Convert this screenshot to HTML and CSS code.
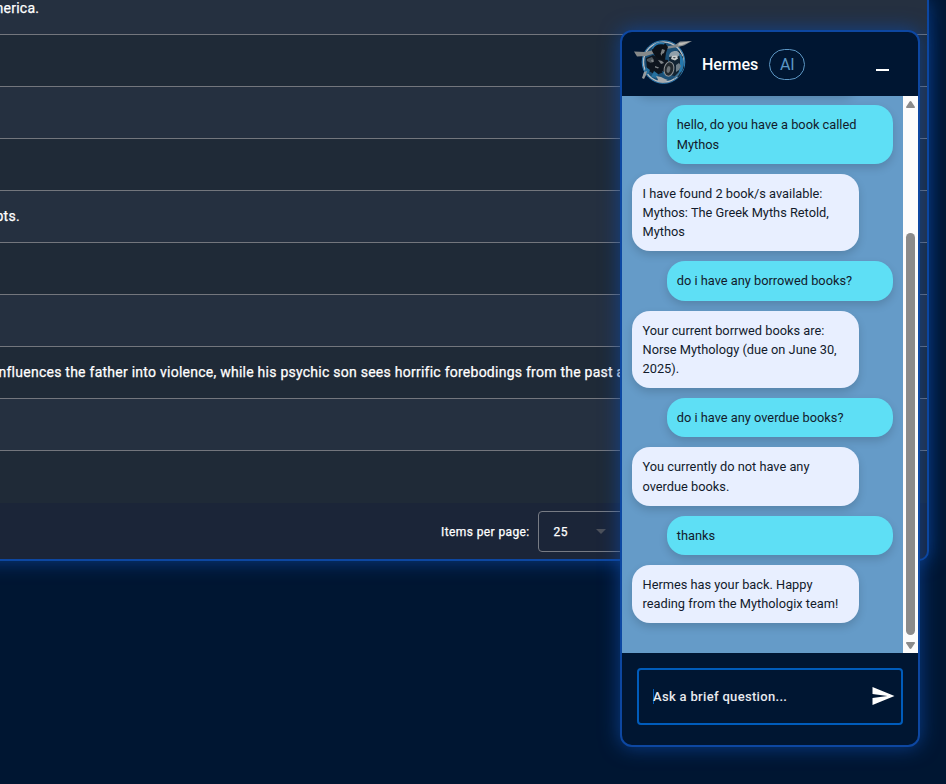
FILE: index.html
```html
<!DOCTYPE html>
<html lang="en">
<head>
<meta charset="utf-8">
<title>Mythologix</title>
<link rel="stylesheet" href="styles.css">
</head>
<body>
<main class="catalog">
  <div class="row">merica.</div>
  <div class="row"></div>
  <div class="row"></div>
  <div class="row"></div>
  <div class="row">pts.</div>
  <div class="row"></div>
  <div class="row"></div>
  <div class="row"><span class="long">nfluences the father into violence, while his psychic son sees horrific forebodings from the past a</span></div>
  <div class="row"></div>
  <div class="row"></div>
  <div class="paginator">
    <span>Items per page:</span>
    <div class="select"><span>25</span><i class="caret"></i></div>
  </div>
</main>

<section class="chat">
  <header class="chat-head">
    <svg class="logo" width="62" height="46" viewBox="0 0 62 46">
      <circle cx="31.5" cy="23" r="21.3" fill="#14263c" stroke="#2d83bd" stroke-width="1"/>
      <circle cx="31.5" cy="23" r="20" fill="#1b4f76" stroke="#b4bdc5" stroke-width="1.4"/>
      <path d="M2 12.5l11 .5 14-3v3l-13 4-9 .5z" fill="#85898a"/>
      <path d="M34 7.5l9-1.5 5-3.5 12-.5-8 4.500-6 1.500-12 2z" fill="#83888c"/>
      <path d="M47 4l11-1.500-8 3.500-4 .5z" fill="#bebdb9"/>
      <path d="M20 12c1-6 6-9 13-8l3 4-2 6-1 7-8 1-2-5z" fill="#0b1119"/>
      <path d="M20 10c1-5 6-8 13-6l-1 1.500c-5-1-9 0-11 4.500z" fill="#2674a8"/>
      <path d="M30 10l3 1-1 3-2 1v2l-1.500-2z" fill="#7d8183"/>
      <path d="M14 19l7-3 7 4 8 1 1 6-5 6-8 3-9-5z" fill="#0e151e"/>
      <path d="M15 20l5-2 2 3-3 3-4-2z" fill="#4d555b"/>
      <path d="M19 21l2-.5 1 2-2 1zM26 21l4 1 2 2-3 1zM23 27l4 1.500-1 1-3-1z" fill="#7f8488"/>
      <path d="M14 28l4 3-2 4-5 2zM22 32l4 3-1 4-6-1zM30 32l4 2-2 2z" fill="#25709f"/>
      <path d="M12 33l3-1-1 4-2 4-2-1z" fill="#969a9d"/>
      <path d="M24 37l5 1 4 2 3 1-5 2.500-6-1 1-2z" fill="#a8abad"/>
      <path d="M37 18l4-5 6-1 4 6 1 11-5 9-9-2z" fill="#122433"/>
      <path d="M37 18c0-5 5-7 9-5.500l4 4.500-3-.5-2 2-5-1z" fill="#91a0aa"/>
      <path d="M47 14c5 4 6 11 3 18l-4 4 2-8 0-8z" fill="#2477ac"/>
      <path d="M40 17l4.500-.5 1.500 3-3 2-4-1.500z" fill="#c9cccb"/>
      <path d="M41 18l3 .5-2 1z" fill="#24323c"/>
      <path d="M44 26l3-2 2 3-2 4-3 2z" fill="#6e7d87"/>
      <ellipse cx="37" cy="30" rx="4.8" ry="7.2" transform="rotate(10 37 30)" fill="#232a2f" stroke="#8f9497" stroke-width="1"/>
      <ellipse cx="36.500" cy="30.500" rx="1.8" ry="3.4" transform="rotate(10 36.5 30.5)" fill="#6d7478"/>
      <path d="M43 37l5-5-1 4-5 4z" fill="#3d7296"/>
    </svg>
    <h1>Hermes</h1>
    <span class="badge">AI</span>
    <button class="minimize" aria-label="Minimize"></button>
  </header>
  <div class="chat-body">
    <div class="messages">
      <p class="bubble bot"></p>
      <p class="bubble user">hello, do you have a book called Mythos</p>
      <p class="bubble bot">I have found 2 book/s available: Mythos: The Greek Myths Retold, Mythos</p>
      <p class="bubble user">do i have any borrowed books?</p>
      <p class="bubble bot">Your current borrwed books are: Norse Mythology (due on June 30, 2025).</p>
      <p class="bubble user">do i have any overdue books?</p>
      <p class="bubble bot">You currently do not have any overdue books.</p>
      <p class="bubble user">thanks</p>
      <p class="bubble bot">Hermes has your back. Happy reading from the Mythologix team!</p>
    </div>
    <div class="scrollbar">
      <svg width="15" height="17" viewBox="0 0 15 17"><path d="M3.800 12Q2.600 12 3.200 10.800L6.600 5.400Q7.500 4.500 8.400 5.400L11.800 10.800Q12.400 12 11.200 12Z" fill="#8b8b8b"/></svg>
      <div class="thumb"></div>
      <svg width="15" height="18" viewBox="0 0 15 18"><path d="M3.800 7Q2.600 7 3.200 8.200L6.600 13.600Q7.500 14.500 8.400 13.600L11.800 8.200Q12.400 7 11.200 7Z" fill="#8b8b8b"/></svg>
    </div>
  </div>
  <footer class="chat-foot">
    <div class="field">
      <i class="cursor"></i>
      <span class="placeholder">Ask a brief question...</span>
      <svg class="send" width="24" height="24" viewBox="0 0 24 24"><path d="M1.500 21L23.500 12 1.500 3v7l15 2-15 2z" fill="#fff"/></svg>
    </div>
  </footer>
</section>
</body>
</html>
```
FILE: styles.css
```css
* { box-sizing: border-box; }

body {
  margin: 0;
  height: 784px;
  overflow: hidden;
  background: #001632;
  color: #fff;
  font-family: Roboto, "Liberation Sans", sans-serif;
}

.catalog {
  width: 989px;
  height: 561px;
  margin-left: -60px;
  border: solid #0d47a1;
  border-width: 0 2px 2px 0;
  border-radius: 0 0 10px 0;
  background: #1b2538;
  box-shadow: 0 0 20px rgba(13, 71, 161, 0.8);
  overflow: hidden;
}

.row {
  display: flex;
  align-items: center;
  height: 52px;
  padding: 0 0 1px 60px;
  border-bottom: 1px solid #73767d;
  background: #1f2a37;
  font-size: 14px;
  font-weight: 400;
  letter-spacing: 0.25px;
  white-space: nowrap;
  -webkit-text-stroke: 0.25px currentColor;
}

.row:nth-child(odd) { background: #253040; }
.row:first-child { height: 35px; padding-bottom: 18px; text-indent: -9px; }
.row:nth-child(5) { text-indent: -4.5px; }
.row:nth-child(10) { border-bottom: 0; }
.long { margin-left: -1.5px; }

.paginator {
  display: flex;
  align-items: center;
  gap: 8px;
  height: 57px;
  padding-left: 501px;
  font-size: 12px;
  font-weight: 400;
  letter-spacing: 0.4px;
  -webkit-text-stroke: 0.25px currentColor;
}

.paginator > span { width: 89px; white-space: nowrap; }

.select {
  display: flex;
  align-items: center;
  gap: 28px;
  width: 108px;
  height: 41px;
  padding-left: 14.5px;
  border: 1px solid #777b84;
  border-radius: 4px;
}

.caret {
  border: 5px solid transparent;
  border-top-color: #4c5059;
  border-bottom: 0;
}

.chat {
  position: absolute;
  top: 30px;
  left: 620px;
  display: flex;
  flex-direction: column;
  width: 300px;
  height: 717px;
  border: 2px solid #0d47a1;
  border-radius: 12px;
  background: #001632;
  box-shadow: 0 0 20px rgba(13, 71, 161, 0.8);
  overflow: hidden;
}

.chat-head {
  display: flex;
  align-items: center;
  height: 64px;
  padding-left: 10px;
}

.logo { margin-top: -5px; }

.chat-head h1 {
  margin: 0 0 0 8px;
  font-size: 16px;
  font-weight: 500;
  letter-spacing: 0;
}

.badge {
  width: 36px;
  height: 31px;
  margin-left: 11px;
  border: 1px solid #5c96c4;
  border-radius: 16px;
  color: #5c96c4;
  font-size: 16px;
  line-height: 29px;
  text-align: center;
}

.minimize {
  width: 13px;
  height: 2px;
  margin: 12px 29px 0 auto;
  padding: 0;
  border: 0;
  background: #fff;
}

.chat-body {
  display: flex;
  height: 557px;
  background: #659bc8;
}

.messages {
  display: flex;
  flex: 1;
  flex-direction: column;
  justify-content: flex-end;
  gap: 10px;
  padding: 0 10px 29.6px;
  overflow: hidden;
}

.bubble {
  flex: none;
  width: 226.5px;
  margin: 0;
  padding: 10px;
  border-radius: 18px;
  box-shadow: 0 4px 8px rgba(0, 0, 0, 0.15);
  color: #121b2c;
  font-size: 12.8px;
  line-height: 19.2px;
}

.bubble:first-child { height: 40px; }
.bot { background: #e8efff; padding-left: 10.5px; }
.user { align-self: flex-end; background: #5edff5; padding-left: 10.3px; }

.scrollbar {
  display: flex;
  flex-direction: column;
  align-items: center;
  width: 15px;
  background: #fcfcfc;
}

.thumb {
  width: 9px;
  height: 402px;
  margin-top: auto;
  border-radius: 5px;
  background: #8b8b8b;
}

.scrollbar svg { flex: none; }

.chat-foot { padding: 15px; }

.field {
  display: flex;
  align-items: center;
  height: 57px;
  padding: 0 6px 0 14px;
  border: 2px solid #005cbb;
  border-radius: 4px;
}

.cursor {
  width: 1px;
  height: 15px;
  margin-right: -1px;
  background: #005cbb;
}

.placeholder {
  flex: 1;
  font-size: 13px;
  font-weight: 500;
  letter-spacing: 0.32px;
  color: #e8eaee;
}

.send { margin-top: -1px; }
```
